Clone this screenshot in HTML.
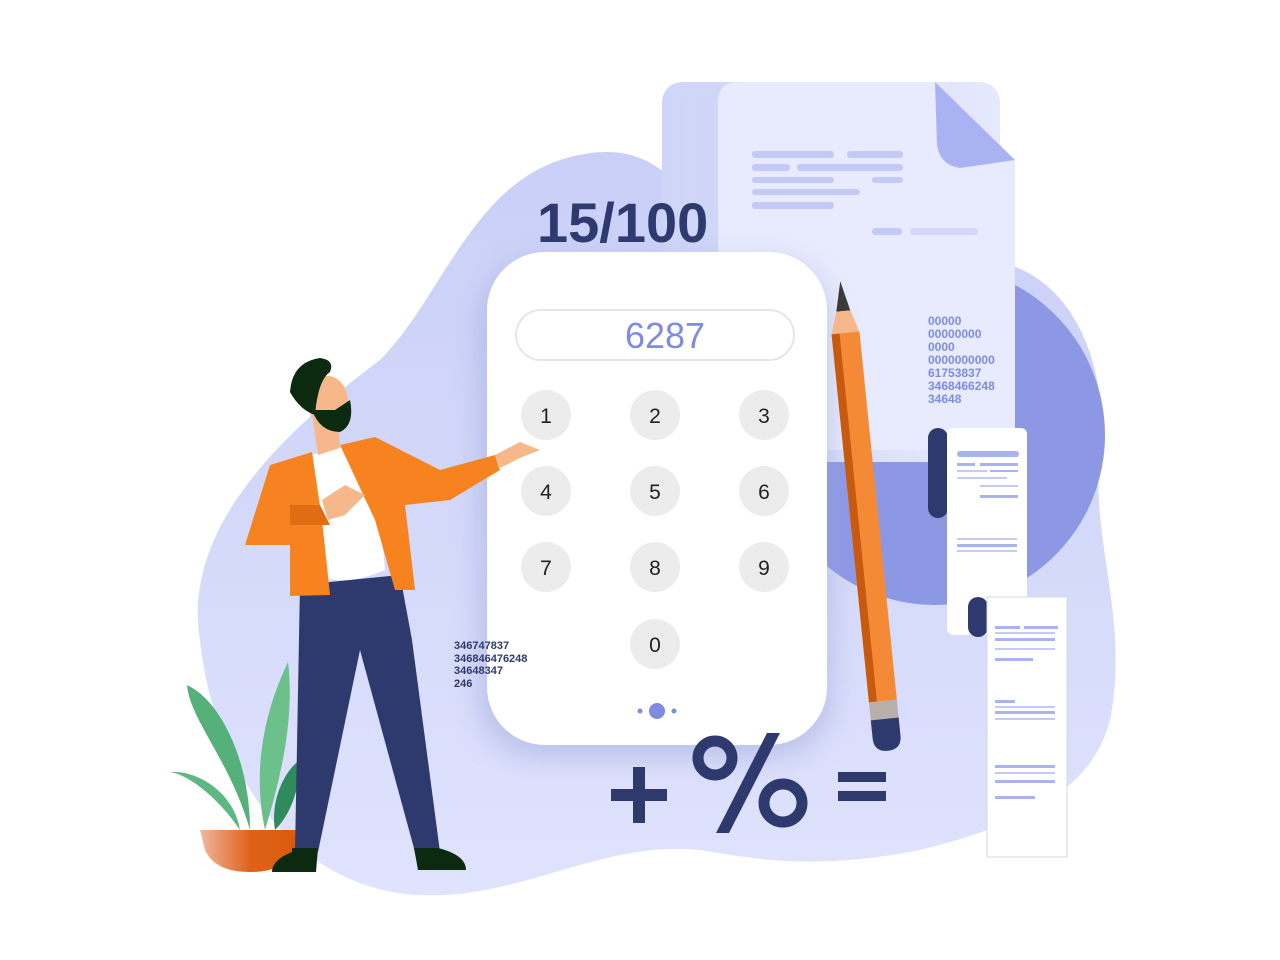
<!DOCTYPE html>
<html><head><meta charset="utf-8"><style>
html,body{margin:0;padding:0;background:#fff;width:1280px;height:960px;overflow:hidden}
svg{display:block}
text{font-family:"Liberation Sans",Arial,sans-serif}
</style></head><body>
<svg width="1280" height="960" viewBox="0 0 1280 960" xmlns="http://www.w3.org/2000/svg">
<defs>
<linearGradient id="bg" x1="0" y1="0" x2="0" y2="1"><stop offset="0" stop-color="#c9cff7"/><stop offset="1" stop-color="#dfe3fd"/></linearGradient>
<linearGradient id="pot" x1="0" y1="0" x2="1" y2="0"><stop offset="0" stop-color="#f0b7a0"/><stop offset="0.5" stop-color="#e0621a"/><stop offset="1" stop-color="#d95a0a"/></linearGradient>
<linearGradient id="pg" x1="0" y1="0" x2="1" y2="0"><stop offset="0" stop-color="#cfd5f8"/><stop offset="1" stop-color="#e6e9fd"/></linearGradient>
<filter id="sh" x="-20%" y="-20%" width="140%" height="140%"><feGaussianBlur stdDeviation="14"/></filter>
</defs>
<path d="M200,640 C180,520 300,420 380,360 C440,300 470,190 560,160 C640,135 680,170 720,250 C760,330 850,280 960,260 C1060,250 1110,350 1100,450 C1090,540 1130,620 1110,720 C1090,800 1000,830 920,850 C820,870 760,860 700,850 C600,840 520,900 420,895 C300,890 215,780 200,640 Z" fill="url(#bg)"/>
<circle cx="935" cy="435" r="170" fill="#8c98e4"/>
<rect x="662" y="82" width="300" height="380" rx="20" fill="url(#pg)"/>
<rect x="680" y="82" width="300" height="380" rx="20" fill="url(#pg)"/>
<rect x="700" y="82" width="300" height="380" rx="20" fill="url(#pg)"/>
<path d="M738,82 L935,82 L1015,160 L1015,450 L718,450 L718,102 Q718,82 738,82 Z" fill="#e8ebfd"/>
<path d="M935,82 L1015,160 L960,168 Q940,165 937,145 Z" fill="#a9b3f1"/>
<g fill="#c4caf5">
<rect x="752" y="151" width="82" height="7" rx="3"/><rect x="847" y="151" width="56" height="7" rx="3"/>
<rect x="752" y="164" width="38" height="7" rx="3"/><rect x="797" y="164" width="106" height="7" rx="3"/>
<rect x="752" y="177" width="82" height="6" rx="3"/><rect x="872" y="177" width="31" height="6" rx="3"/>
<rect x="752" y="189" width="108" height="6" rx="3"/>
<rect x="752" y="202" width="82" height="7" rx="3"/>
<rect x="872" y="228" width="30" height="7" rx="3"/><rect x="910" y="228" width="68" height="7" rx="3" fill="#d4d8f8"/>
</g>
<g fill="#7e8be0" font-size="12" font-weight="bold">
<text x="928" y="325">00000</text><text x="928" y="338">00000000</text><text x="928" y="351">0000</text>
<text x="928" y="364">0000000000</text><text x="928" y="377">61753837</text><text x="928" y="390">3468466248</text><text x="928" y="403">34648</text>
</g>
<text x="537" y="242" font-size="56" font-weight="bold" fill="#2e3a6e">15/100</text>
<rect x="480" y="262" width="350" height="495" rx="60" fill="#9aa3d8" opacity="0.5" filter="url(#sh)"/>
<rect x="487" y="252" width="340" height="493" rx="58" fill="#ffffff"/>
<rect x="516" y="310" width="278" height="50" rx="25" fill="#fff" stroke="#e6e6e6" stroke-width="2"/>
<text x="665" y="348" font-size="36" fill="#7e8be0" text-anchor="middle">6287</text>
<g fill="#ececec">
<circle cx="546" cy="415" r="25"/><circle cx="655" cy="415" r="25"/><circle cx="764" cy="415" r="25"/>
<circle cx="546" cy="491" r="25"/><circle cx="655" cy="491" r="25"/><circle cx="764" cy="491" r="25"/>
<circle cx="546" cy="567" r="25"/><circle cx="655" cy="567" r="25"/><circle cx="764" cy="567" r="25"/>
<circle cx="655" cy="644" r="25"/>
</g>
<g font-size="21" fill="#222" text-anchor="middle">
<text x="546" y="423">1</text><text x="655" y="423">2</text><text x="764" y="423">3</text>
<text x="546" y="499">4</text><text x="655" y="499">5</text><text x="764" y="499">6</text>
<text x="546" y="575">7</text><text x="655" y="575">8</text><text x="764" y="575">9</text>
<text x="655" y="652">0</text>
</g>
<circle cx="640" cy="711" r="2.5" fill="#7e8be0"/><circle cx="657" cy="711" r="8" fill="#7e8be0"/><circle cx="674" cy="711" r="2.5" fill="#7e8be0"/>
<g fill="#2e3a6e" font-size="11" font-weight="bold">
<text x="454" y="649">346747837</text><text x="454" y="662">346846476248</text><text x="454" y="674">34648347</text><text x="454" y="687">246</text>
</g>
<g transform="translate(12,0) rotate(-5.8 852 515)">
<polygon points="852,280 845,310 859,310" fill="#3a3a3a"/>
<polygon points="845,310 838,332 866,332 859,310" fill="#f6b88a"/>
<rect x="838" y="332" width="28" height="370" fill="#f48a35"/>
<rect x="838" y="332" width="8" height="370" fill="#c85a10"/>
<rect x="838" y="702" width="28" height="18" fill="#b8b0ad"/>
<path d="M838,720 L866,720 L866,738 Q866,752 852,752 Q838,752 838,738 Z" fill="#2e3a6e"/>
</g>
<g fill="#2e3a6e">
<rect x="633" y="767" width="12" height="56"/><rect x="611" y="789" width="56" height="12"/>
<rect x="838" y="772" width="48" height="10"/><rect x="838" y="791" width="48" height="10"/>
</g>
<circle cx="715" cy="758" r="17" fill="none" stroke="#2e3a6e" stroke-width="11"/>
<circle cx="783" cy="803" r="19" fill="none" stroke="#2e3a6e" stroke-width="11"/>
<polygon points="767,733 780,733 729,833 716,833" fill="#2e3a6e"/>
<rect x="928" y="428" width="20" height="90" rx="10" fill="#2e3a6e"/>
<rect x="947" y="428" width="80" height="207" rx="6" fill="#fff"/>
<g fill="#a9b3f1">
<rect x="957" y="451" width="62" height="6" rx="3"/>
<rect x="957" y="463" width="18" height="3"/><rect x="980" y="463" width="38" height="3"/>
<rect x="957" y="470" width="30" height="2" fill="#c4caf5"/><rect x="990" y="470" width="28" height="2"/>
<rect x="957" y="477" width="50" height="2" fill="#c4caf5"/><rect x="980" y="485" width="38" height="2" fill="#c4caf5"/>
<rect x="980" y="495" width="38" height="3"/>
<rect x="957" y="538" width="60" height="2" fill="#c4caf5"/><rect x="957" y="544" width="60" height="3"/><rect x="957" y="550" width="60" height="2" fill="#c4caf5"/>
</g>
<rect x="968" y="597" width="20" height="40" rx="10" fill="#2e3a6e"/>
<rect x="987" y="597" width="80" height="260" fill="#fff" stroke="#d8d8d8" stroke-width="1"/>
<g fill="#a9b3f1">
<rect x="995" y="626" width="25" height="3"/><rect x="1024" y="626" width="34" height="3"/>
<rect x="995" y="632" width="60" height="2" fill="#c4caf5"/><rect x="995" y="638" width="60" height="3"/>
<rect x="995" y="648" width="60" height="2" fill="#c4caf5"/><rect x="995" y="658" width="38" height="3"/>
<rect x="995" y="700" width="20" height="3"/><rect x="995" y="706" width="60" height="2" fill="#c4caf5"/><rect x="995" y="711" width="60" height="3"/><rect x="995" y="718" width="60" height="2" fill="#c4caf5"/>
<rect x="995" y="765" width="60" height="3"/><rect x="995" y="772" width="60" height="2" fill="#c4caf5"/><rect x="995" y="780" width="60" height="3"/><rect x="995" y="796" width="40" height="3"/>
</g>
<g>
<path d="M250,830 C230,760 190,720 187,685 C220,700 250,760 250,830 Z" fill="#55b07a"/>
<path d="M265,830 C250,760 270,700 288,662 C295,720 280,780 265,830 Z" fill="#6cc08a"/>
<path d="M240,830 C220,800 190,775 170,772 C200,770 235,795 240,830 Z" fill="#5fb882"/>
<path d="M275,830 C270,800 285,770 300,760 C300,790 290,815 275,830 Z" fill="#2f8a5c"/>
<path d="M200,830 L300,830 L295,850 Q285,872 250,872 Q215,872 205,850 Z" fill="url(#pot)"/>
</g>
<g>
<path d="M300,585 L400,575 L412,640 L440,852 L415,852 L360,650 L318,852 L295,852 Z" fill="#2e3a6e"/>
<path d="M292,848 L318,848 L316,872 L272,872 Q272,860 292,852 Z" fill="#0c2a10"/>
<path d="M414,848 L438,848 Q466,855 466,870 L418,870 Z" fill="#0c2a10"/>
<path d="M312,455 L345,445 L375,460 L385,570 Q350,585 325,578 Z" fill="#fff"/>
<path d="M340,445 L375,437 L440,470 L495,455 L500,470 L450,500 L405,505 L415,590 L395,590 L375,520 Z" fill="#f78220"/>
<path d="M312,452 L270,465 L245,545 L290,545 L290,596 L330,595 L322,520 Z" fill="#f78220"/>
<path d="M290,505 L320,505 L330,525 L290,525 Z" fill="#e06c14"/>
<path d="M495,455 L520,442 L540,450 L520,458 L500,468 Z" fill="#f6b88a"/>
<path d="M322,500 L345,485 L365,495 L345,515 L328,520 Z" fill="#f6b88a"/>
<path d="M313,420 L338,420 L340,448 L318,455 Z" fill="#f6b88a"/>
<ellipse cx="328" cy="402" rx="20" ry="26" fill="#f6b88a"/>
<path d="M312,410 Q320,432 340,432 Q355,425 350,400 L335,410 Z" fill="#0c2a10"/>
<path d="M290,392 Q292,362 320,358 Q335,360 330,372 Q318,380 315,415 Q300,410 290,392 Z" fill="#0c2a10"/>
</g>
</svg>
</body></html>
